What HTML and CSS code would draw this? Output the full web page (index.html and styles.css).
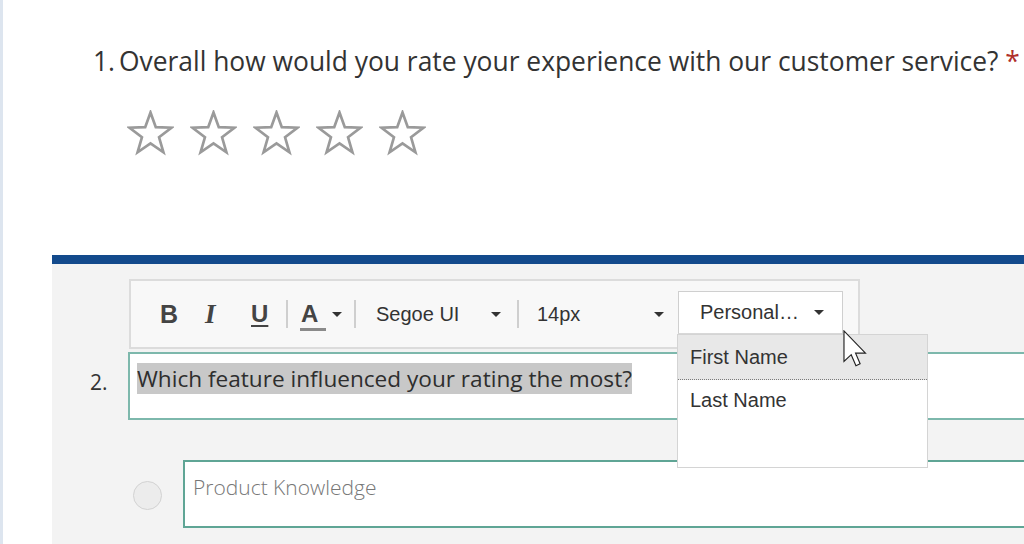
FILE: index.html
```html
<!DOCTYPE html>
<html>
<head>
<meta charset="utf-8">
<link rel="stylesheet" href="styles.css">
</head>
<body>
<div class="page">
  <div class="q1">
    <div class="q1-title"><span class="num">1.</span>Overall how would you rate your experience with our customer service? <span class="req">*</span></div>
    <div class="stars">
      <svg class="star" viewBox="0 0 47 47" width="47" height="47"><polygon points="23.5,2.5 28.79,17.22 44.42,17.7 32.06,27.28 36.43,42.3 23.5,33.5 10.57,42.3 14.94,27.28 2.58,17.7 18.21,17.22"/></svg>
      <svg class="star" viewBox="0 0 47 47" width="47" height="47"><polygon points="23.5,2.5 28.79,17.22 44.42,17.7 32.06,27.28 36.43,42.3 23.5,33.5 10.57,42.3 14.94,27.28 2.58,17.7 18.21,17.22"/></svg>
      <svg class="star" viewBox="0 0 47 47" width="47" height="47"><polygon points="23.5,2.5 28.79,17.22 44.42,17.7 32.06,27.28 36.43,42.3 23.5,33.5 10.57,42.3 14.94,27.28 2.58,17.7 18.21,17.22"/></svg>
      <svg class="star" viewBox="0 0 47 47" width="47" height="47"><polygon points="23.5,2.5 28.79,17.22 44.42,17.7 32.06,27.28 36.43,42.3 23.5,33.5 10.57,42.3 14.94,27.28 2.58,17.7 18.21,17.22"/></svg>
      <svg class="star" viewBox="0 0 47 47" width="47" height="47"><polygon points="23.5,2.5 28.79,17.22 44.42,17.7 32.06,27.28 36.43,42.3 23.5,33.5 10.57,42.3 14.94,27.28 2.58,17.7 18.21,17.22"/></svg>
    </div>
  </div>

  <div class="panel">
    <div class="toolbar">
      <span class="tool t-b">B</span>
      <span class="tool t-i">I</span>
      <span class="tool t-u">U</span>
      <span class="sep"></span>
      <span class="tool t-a">A</span>
      <span class="caret c-a"></span>
      <span class="sep s-2"></span>
      <span class="tool t-font">Segoe UI</span>
      <span class="caret"></span>
      <span class="sep s-3"></span>
      <span class="tool t-size">14px</span>
      <span class="caret"></span>
      <div class="personal">
        <span class="p-label">Personal…</span>
        <span class="caret"></span>
        <div class="menu">
          <div class="menu-item active">First Name</div>
          <div class="menu-item">Last Name</div>
        </div>
        <svg class="cursor" width="24" height="38" viewBox="0 0 12.6 20">
          <path d="M0.5,0.5 L0.5,16.5 L4.3,13 L6.8,18.8 L9,17.8 L6.6,12.2 L11.8,12.2 Z" fill="#fff" stroke="#222" stroke-width="0.6" stroke-linejoin="miter"/>
        </svg>
      </div>
    </div>

    <div class="q2-row">
      <div class="q2-num">2.</div>
      <div class="q2-box"><span class="hl">Which feature influenced your rating the most?</span></div>
    </div>

    <div class="opt-row">
      <span class="radio"></span>
      <div class="opt-box">Product Knowledge</div>
    </div>
  </div>
</div>
</body>
</html>
```

FILE: styles.css
```css
html, body {
  margin: 0;
  padding: 0;
  background: #fff;
}
.page {
  width: 1021px;
  height: 544px;
  border-left: 3px solid #dde5ef;
  overflow: hidden;
  font-family: "Open Sans", "Noto Sans", sans-serif;
  color: #333;
}
.q1 {
  padding: 43px 0 0 90px;
}
.q1-title {
  font-size: 26.4px;
  line-height: 36px;
  white-space: nowrap;
  color: #333;
}
.num {
  margin-right: 4px;
}
.req {
  color: #b0302a;
}
.stars {
  display: flex;
  gap: 16px;
  margin: 31px 0 0 34px;
}
.star polygon {
  fill: none;
  stroke: #9a9a9a;
  stroke-width: 2.7;
}
.panel {
  margin: 98px 0 0 49px;
  border-top: 9px solid #134a8c;
  background: #f3f3f3;
  height: 300px;
  overflow: hidden;
  position: relative;
}
.toolbar {
  margin: 15px 0 0 77px;
  width: 727px;
  height: 66px;
  border: 2px solid #dcdcdc;
  background: #f8f8f8;
  display: flex;
  align-items: center;
  font-family: "Liberation Sans", Arial, sans-serif;
  font-size: 20px;
  color: #333;
  position: relative;
  z-index: 2;
}
.tool {
  flex-shrink: 0;
  display: block;
}
.t-b {
  margin-left: 29px;
  width: 45px;
  font-weight: bold;
  font-size: 25px;
  color: #444;
}
.t-i {
  width: 46px;
  font-family: "Liberation Serif", serif;
  font-style: italic;
  font-weight: bold;
  font-size: 27px;
  color: #444;
}
.t-u {
  width: 35px;
  font-weight: bold;
  font-size: 24px;
  color: #444;
  text-decoration: underline;
  text-decoration-thickness: 2px;
  text-underline-offset: 3px;
}
.sep {
  flex-shrink: 0;
  width: 2px;
  height: 28px;
  background: #cfcfcf;
}
.t-a {
  margin-left: 13px;
  width: 31px;
  font-weight: bold;
  font-size: 24px;
  color: #444;
  position: relative;
}
.t-a::after {
  content: "";
  position: absolute;
  left: -1px;
  width: 26px;
  bottom: -3px;
  height: 3px;
  background: #8a8a8a;
}
.caret {
  flex-shrink: 0;
  width: 0;
  height: 0;
  border-left: 5px solid transparent;
  border-right: 5px solid transparent;
  border-top: 5px solid #333;
}
.c-a {
  margin-top: 1px;
}
.s-2 {
  margin-left: 12px;
}
.t-font {
  margin-left: 20px;
  width: 115px;
}
.s-3 {
  margin-left: 16px;
}
.t-size {
  margin-left: 18px;
  width: 117px;
}
.personal {
  flex-shrink: 0;
  margin-left: 14px;
  margin-bottom: 3px;
  width: 163px;
  height: 41px;
  border: 1px solid #cfcfcf;
  border-bottom: 1px solid #d8d8d8;
  background: #fff;
  display: flex;
  align-items: center;
  position: relative;
  box-sizing: content-box;
}
.p-label {
  margin-left: 21px;
  width: 114px;
}
.menu {
  position: absolute;
  left: -2px;
  top: 42px;
  width: 249px;
  height: 132px;
  background: #fff;
  border: 1px solid #d4d4d4;
  z-index: 3;
}
.menu-item {
  padding-left: 12px;
  height: 42px;
  line-height: 40px;
}
.menu-item.active {
  height: 44px;
  line-height: 44px;
  background: #e8e8e8;
  border-bottom: 1px dotted #7a7a7a;
}
.cursor {
  position: absolute;
  left: 164px;
  top: 38px;
  z-index: 5;
}
.q2-row {
  display: flex;
  margin-top: 3px;
}
.q2-num {
  flex-shrink: 0;
  width: 38px;
  padding-left: 38px;
  padding-top: 16px;
  font-size: 21px;
  color: #333;
}
.q2-box {
  width: 1000px;
  height: 55px;
  flex-shrink: 0;
  border: 2px solid #7db8ac;
  background: #fff;
  padding: 9px 0 0 7px;
  box-sizing: content-box;
  font-size: 22.6px;
  color: #2e2e2e;
  white-space: nowrap;
}
.hl {
  background: #c8c8c8;
}
.opt-row {
  display: flex;
  align-items: center;
  margin-top: 40px;
}
.radio {
  flex-shrink: 0;
  margin-left: 81px;
  margin-top: 3px;
  width: 27px;
  height: 27px;
  border-radius: 50%;
  border: 1px solid #d2d2d2;
  background: #ececec;
}
.opt-box {
  flex-shrink: 0;
  margin-left: 21px;
  width: 1000px;
  height: 53px;
  border: 2px solid #5fa595;
  background: #fff;
  padding: 11px 0 0 8px;
  font-size: 21px;
  font-weight: 300;
  color: #777;
  white-space: nowrap;
}
```
